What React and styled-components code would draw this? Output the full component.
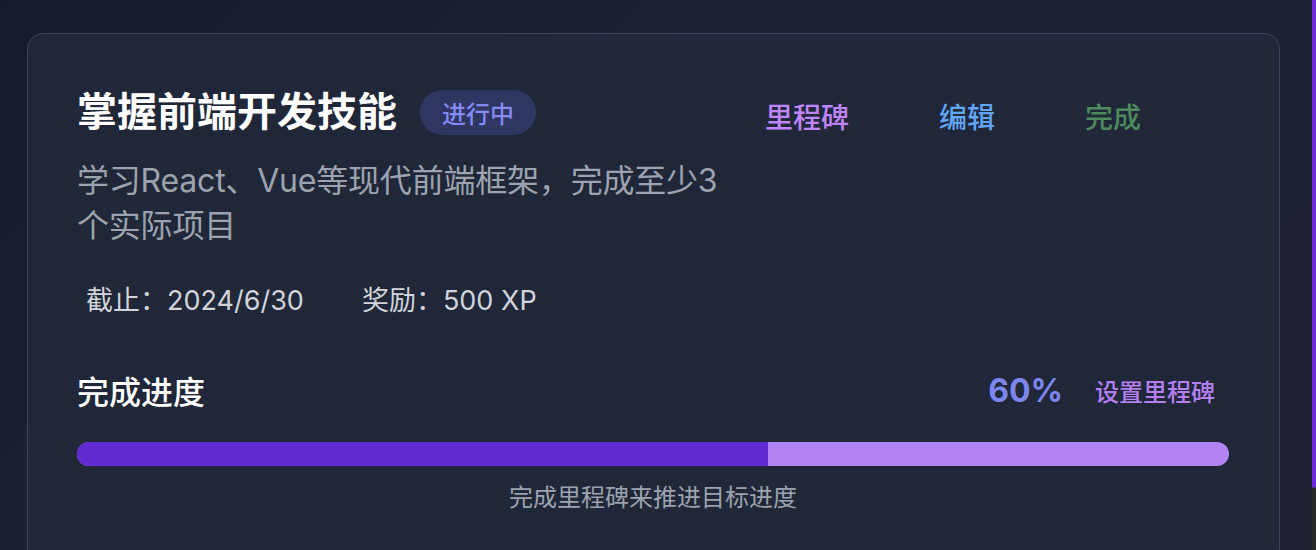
import React from "react"
import styled, { createGlobalStyle } from "styled-components"

const GlobalStyle = createGlobalStyle`
  html {
    background: #1b2032;
    scrollbar-width: none;
  }
  html::-webkit-scrollbar {
    display: none;
  }
  body {
    margin: 0;
    font-family: Inter, "Noto Sans CJK SC", sans-serif;
    background: linear-gradient(135deg, #161b2b 0%, #1d2234 40%, #1e2234 100%);
    min-height: 100vh;
  }
  * {
    box-sizing: border-box;
  }
`

const ScrollTrack = styled.div`
  position: fixed;
  top: 0;
  right: 0;
  bottom: 0;
  width: 4px;
  background: #252628;
`

const ScrollThumb = styled.div`
  height: 88.7%;
  border-radius: 0 0 4px 4px;
  background: #6b2ddb;
`

const Page = styled.div`
  padding: 33px 36px 55px 27px;
`

const Card = styled.section`
  background: #1f2738;
  border: 1px solid #3d4658;
  border-radius: 16px;
  padding: 50px 50px 50px 49px;
`

const Header = styled.div`
  display: flex;
  justify-content: space-between;
  align-items: flex-start;
`

const TitleRow = styled.div`
  display: flex;
  align-items: center;
`

const Title = styled.h2`
  margin: 0;
  font-size: 40px;
  line-height: 56px;
  font-weight: 700;
  color: #ffffff;
`

const Badge = styled.span`
  margin-left: 23px;
  height: 45px;
  padding: 0 22px;
  display: inline-flex;
  align-items: center;
  border-radius: 999px;
  background: #2f3662;
  color: #838af2;
  font-size: 24px;
  font-weight: 500;
`

const Actions = styled.div`
  display: flex;
  gap: 90px;
  margin-top: 14px;
  margin-right: 88px;
`

const TextButton = styled.button`
  border: none;
  background: none;
  padding: 0;
  font-family: inherit;
  font-size: 28px;
  line-height: 40px;
  font-weight: 500;
  color: ${(p) => p.$color};
  cursor: pointer;
`

const Description = styled.p`
  margin: 18px 0 0;
  max-width: 660px;
  font-size: 32px;
  line-height: 45px;
  letter-spacing: -0.2px;
  color: #9ca3af;
`

const Meta = styled.div`
  display: flex;
  gap: 58px;
  margin-top: 35px;
  padding-left: 9px;
  font-size: 27px;
  line-height: 36px;
  color: #d1d5db;
`

const ProgressHead = styled.div`
  display: flex;
  align-items: center;
  margin-top: 49px;
  height: 44px;
`

const ProgressLabel = styled.h3`
  margin: 0;
  flex: 1;
  font-size: 32px;
  font-weight: 500;
  color: #ffffff;
`

const Percent = styled.span`
  font-size: 32px;
  font-weight: 700;
  color: #7c86ee;
`

const MilestoneLink = styled.button`
  margin-left: 18px;
  border: none;
  background: none;
  padding: 0 14px;
  font-family: inherit;
  font-size: 24px;
  font-weight: 500;
  color: #b57ff2;
  cursor: pointer;
`

const Track = styled.div`
  margin-top: 30px;
  height: 24px;
  border-radius: 999px;
  background: #b383f3;
  overflow: hidden;
`

const Fill = styled.div`
  height: 100%;
  background: #6129d0;
`

const Hint = styled.p`
  margin: 16px 0 0;
  text-align: center;
  font-size: 24px;
  line-height: 32px;
  color: #9ca3af;
`

const goal = {
  title: "掌握前端开发技能",
  status: "进行中",
  description: "学习React、Vue等现代前端框架，完成至少3个实际项目",
  deadline: "2024/6/30",
  reward: 500,
  progress: 60,
}

export default function App() {
  return (
    <>
      <GlobalStyle />
      <Page>
        <Card>
          <Header>
            <TitleRow>
              <Title>{goal.title}</Title>
              <Badge>{goal.status}</Badge>
            </TitleRow>
            <Actions>
              <TextButton $color="#c084fc">里程碑</TextButton>
              <TextButton $color="#62a5f7">编辑</TextButton>
              <TextButton $color="#4d8a5d">完成</TextButton>
            </Actions>
          </Header>
          <Description>{goal.description}</Description>
          <Meta>
            <span>截止：{goal.deadline}</span>
            <span>奖励：{goal.reward} XP</span>
          </Meta>
          <ProgressHead>
            <ProgressLabel>完成进度</ProgressLabel>
            <Percent>{goal.progress}%</Percent>
            <MilestoneLink>设置里程碑</MilestoneLink>
          </ProgressHead>
          <Track>
            <Fill style={{ width: `${goal.progress}%` }} />
          </Track>
          <Hint>完成里程碑来推进目标进度</Hint>
        </Card>
      </Page>
      <ScrollTrack>
        <ScrollThumb />
      </ScrollTrack>
    </>
  )
}
